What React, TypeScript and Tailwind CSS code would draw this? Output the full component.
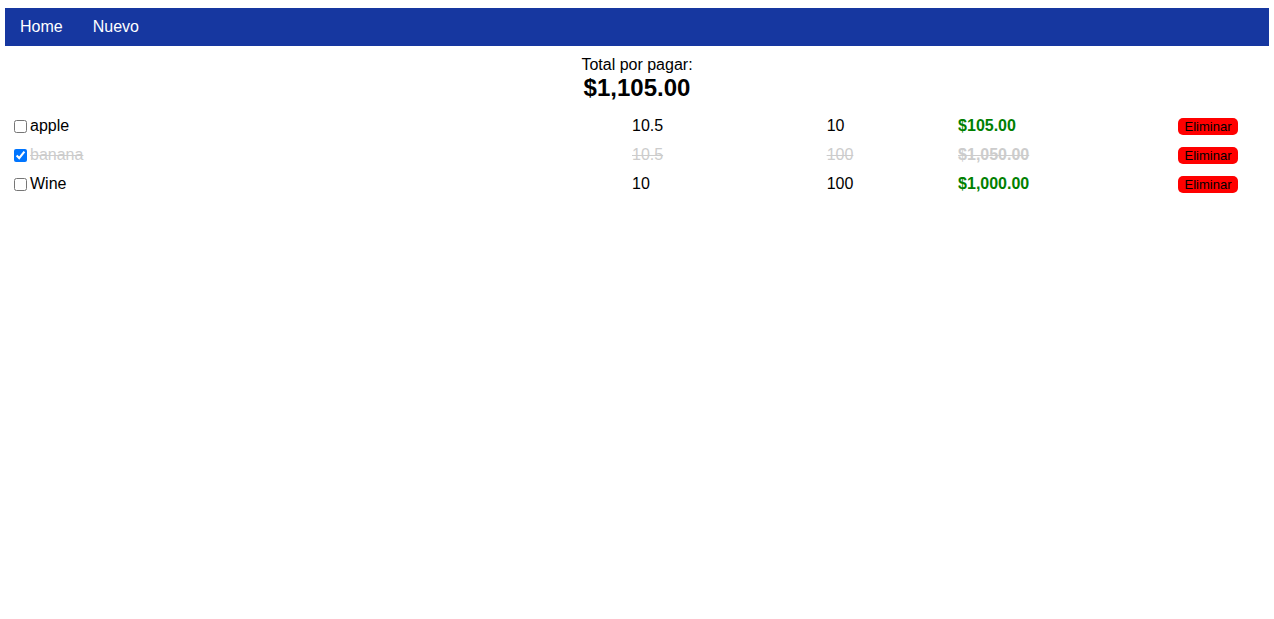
import { useState } from "react";

type Product = {
  id: number;
  name: string;
  price: number;
  quantity: number;
  done: boolean;
};

const initialProducts: Product[] = [
  { id: 1, name: "apple", price: 10.5, quantity: 10, done: false },
  { id: 2, name: "banana", price: 10.5, quantity: 100, done: true },
  { id: 3, name: "Wine", price: 10, quantity: 100, done: false },
];

const money = new Intl.NumberFormat("en-US", { style: "currency", currency: "USD" });

function NavBar() {
  return (
    <nav className="flex bg-[#1637a0] text-white">
      <a href="#home" className="px-[15px] py-[7px]">Home</a>
      <a href="#nuevo" className="px-[15px] py-[7px]">Nuevo</a>
    </nav>
  );
}

type RowProps = {
  product: Product;
  onToggle: () => void;
  onRemove: () => void;
};

function ProductRow({ product, onToggle, onRemove }: RowProps) {
  const { name, price, quantity, done } = product;
  const text = done ? "p-0 text-[#cccccc] line-through" : "p-0";
  const amount = done
    ? "p-0 font-bold text-[#cccccc] line-through"
    : "p-0 font-bold text-[#008000]";

  return (
    <tr>
      <td className="p-0 pl-[9px]">
        <label className="flex items-center gap-[3px]">
          <input
            type="checkbox"
            className="mt-[2px] size-[13px]"
            checked={done}
            onChange={onToggle}
          />
          <span className={text}>{name}</span>
        </label>
      </td>
      <td className={text}>{price}</td>
      <td className={text}>{quantity}</td>
      <td className={amount}>{money.format(price * quantity)}</td>
      <td className="p-0">
        <button
          type="button"
          onClick={onRemove}
          className="mt-[2px] block w-[60px] rounded-[5px] bg-[#ff0000] text-center text-[13px] leading-[17px] text-black"
        >
          Eliminar
        </button>
      </td>
    </tr>
  );
}

export default function App() {
  const [products, setProducts] = useState(initialProducts);

  const total = products
    .filter((p) => !p.done)
    .reduce((sum, p) => sum + p.price * p.quantity, 0);

  const toggle = (id: number) =>
    setProducts(products.map((p) => (p.id === id ? { ...p, done: !p.done } : p)));

  const remove = (id: number) => setProducts(products.filter((p) => p.id !== id));

  return (
    <div className="px-[5px] pt-2 font-['Liberation_Sans',Arial,sans-serif] text-base text-black">
      <NavBar />
      <main>
        <div className="pt-[10px] text-center leading-[18px]">
          <p>Total por pagar:</p>
          <p className="text-2xl leading-7 font-bold">{money.format(total)}</p>
        </div>
        <table className="mt-[9px] w-full table-fixed text-left leading-[29px]">
          <colgroup>
            <col />
            <col className="w-[15.4%]" />
            <col className="w-[10.4%]" />
            <col className="w-[17.4%]" />
            <col className="w-[7.2%]" />
          </colgroup>
          <tbody>
            {products.map((p) => (
              <ProductRow
                key={p.id}
                product={p}
                onToggle={() => toggle(p.id)}
                onRemove={() => remove(p.id)}
              />
            ))}
          </tbody>
        </table>
      </main>
    </div>
  );
}
